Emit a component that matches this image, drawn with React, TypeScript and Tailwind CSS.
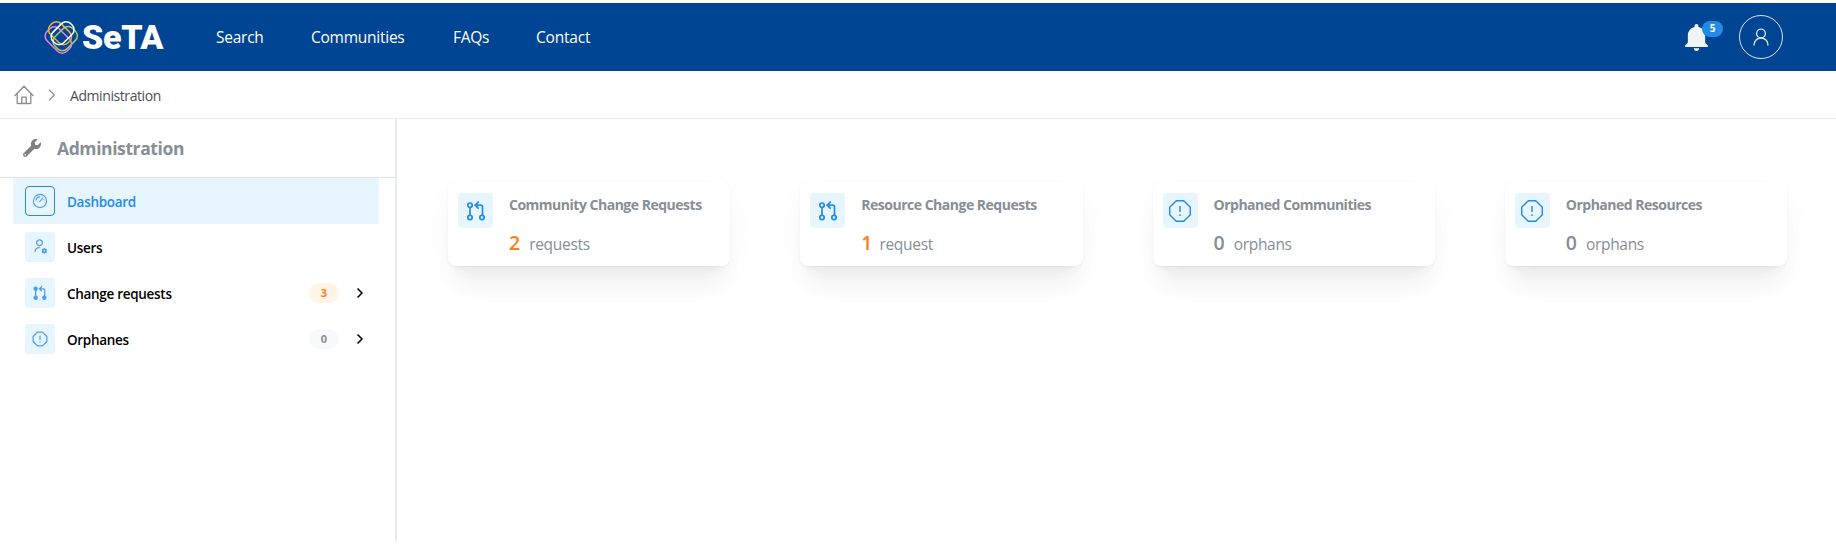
import { ReactNode } from "react";
import { IoMdNotifications } from "react-icons/io";
import { FaWrench } from "react-icons/fa";

function Logo() {
  return (
    <svg width="35" height="34" viewBox="0 0 35 34" fill="none" strokeWidth="1.5">
      <rect x="-12.5" y="-8.5" width="25" height="17" rx="6.5" stroke="#a3c96a" transform="translate(21.2 18.6) rotate(-45)" />
      <rect x="-14" y="-8.5" width="28" height="17" rx="6.5" stroke="#ee82d8" transform="translate(14.3 20) rotate(45)" />
      <rect x="-12.5" y="-7.5" width="25" height="15" rx="6.5" stroke="#e3b440" transform="translate(16 13.2) rotate(45)" />
      <rect x="-12.5" y="-7.5" width="25" height="15" rx="6.5" stroke="#ffffff" transform="translate(18.600 13.2) rotate(-45)" />
    </svg>
  );
}

function HomeIcon() {
  return (
    <svg width="20" height="20" viewBox="0 0 20 20" fill="none" stroke="#868e96" strokeWidth="1.3" strokeLinejoin="round" strokeLinecap="round">
      <path d="M1 10.5 10 1.2l9 9.3M3.2 8.8v9.7h13.6V8.8M7.8 18.3v-6.2h4.4v6.2" />
    </svg>
  );
}

function Chevron({ className, size }: { className: string; size: number }) {
  return (
    <svg width={size} height={size} viewBox="0 0 12 12" fill="none" stroke="currentColor" className={className}>
      <path d="m3.5 1.5 4.5 4.5-4.5 4.5" />
    </svg>
  );
}

function PersonIcon() {
  return (
    <svg width="16" height="18" viewBox="0 0 16 18" fill="none" stroke="#dbe4f0" strokeWidth="1.4">
      <circle cx="8" cy="5.5" r="4.4" />
      <path d="M1 17.5c0-4.4 3-7.5 7-7.5s7 3.1 7 7.5" />
    </svg>
  );
}

function MeterIcon() {
  return (
    <svg width="16" height="16" viewBox="0 0 16 16" fill="none" stroke="currentColor" strokeWidth="1.1">
      <circle cx="8" cy="8" r="6.6" />
      <path d="m7.5 8.8 3.7-4.3M4 7.8A4.2 4.2 0 0 1 8.2 3.9M12 7.4l-.4-1" />
    </svg>
  );
}

function UserCogIcon() {
  return (
    <svg width="16" height="16" viewBox="0 0 16 16" fill="none" stroke="currentColor" strokeWidth="1.2">
      <circle cx="7.5" cy="3.8" r="2.9" />
      <path d="M3 13c0-3 1.7-4.3 4.8-4.3" />
      <circle cx="12.3" cy="11.9" r="1.6" strokeWidth="1.6" />
      <path d="M12.3 9v1.3M12.3 13.5v1.3M9.8 10.4l1.1.7M13.7 12.7l1.1.7M9.8 13.4l1.1-.7M13.7 11.1l1.1-.7" />
    </svg>
  );
}

function PullRequestIcon({ size, dotFill }: { size: number; dotFill: string }) {
  return (
    <svg width={size} height={size} viewBox="0 0 22 22" fill="none" stroke="currentColor" strokeWidth="1.7">
      <g fill={dotFill}>
        <circle cx="5" cy="5.2" r="2.2" />
        <circle cx="5" cy="17.5" r="2.2" />
        <circle cx="17" cy="17.5" r="2.2" />
      </g>
      <path d="M5 7.4v7.9M17.5 15.3V7c0-1.2-.6-1.8-1.8-1.8h-5M13.7 1.7l-3.5 3.5 3.5 3.5" />
    </svg>
  );
}

function StopIcon({ size, stroke }: { size: number; stroke: number }) {
  return (
    <svg width={size} height={size} viewBox="0 0 24 24" fill="none" stroke="currentColor" strokeWidth={stroke}>
      <path d="M8.3 1.7h7.4l6.6 6.6v7.4l-6.6 6.6H8.3l-6.6-6.6V8.3Z" strokeLinejoin="round" />
      <path d="M12 7v6M12 15.2v1.8" />
    </svg>
  );
}

type ItemProps = {
  icon: ReactNode;
  label: string;
  active?: boolean;
  badge?: ReactNode;
};

function NavItem({ icon, label, active, badge }: ItemProps) {
  return (
    <a className={`flex h-[46px] items-center pl-3 pr-[13px] ${active ? "bg-[#e7f5ff] text-[#228be6]" : "text-black"}`}>
      <span className={`flex size-[30px] items-center justify-center rounded bg-[#e7f5ff] text-[#4a9fe9] ${active ? "border border-[#228be6]" : ""}`}>
        {icon}
      </span>
      <span className="ml-3 whitespace-nowrap pt-[2px] text-[13.5px] font-semibold tracking-[-0.3px]">{label}</span>
      {badge && (
        <span className="ml-auto flex items-center">
          {badge}
          <Chevron size={12} className="ml-[15px] [stroke-width:1.5]" />
        </span>
      )}
    </a>
  );
}

type CardProps = {
  icon: ReactNode;
  title: string;
  count: number;
  unit: string;
};

function StatCard({ icon, title, count, unit }: CardProps) {
  return (
    <section className="flex h-[84px] rounded-lg bg-white pl-[10px] pt-[11px] shadow-[0_1px_3px_rgba(0,0,0,0.05),0_28px_23px_-7px_rgba(0,0,0,0.04),0_12px_12px_-7px_rgba(0,0,0,0.04),0_10px_36px_rgba(0,0,0,0.03)]">
      <div className="flex size-[35px] items-center justify-center rounded bg-[#e7f5ff] text-[#228be6]">{icon}</div>
      <div className="ml-4 text-[#868e96]">
        <h2 className="whitespace-nowrap pt-px text-[14px] font-bold leading-[22px] tracking-[-0.49px]">{title}</h2>
        <p className="mt-[11px] flex items-baseline whitespace-nowrap leading-[32px]">
          <span className={`text-[19.5px] font-semibold ${count ? "text-[#fd7e14]" : ""}`}>{count}</span>
          <span className={`text-[15.5px] tracking-[-0.3px] ${count === 1 ? "ml-[7px]" : "ml-[9px]"}`}>{unit}</span>
        </p>
      </div>
    </section>
  );
}

export default function App() {
  return (
    <div className="h-[550px] bg-white pt-[3px] font-['Open_Sans','Noto_Sans',sans-serif]">
      <header className="flex h-[68px] items-center bg-[#004494] pl-[44px] pr-[53px] text-white">
        <Logo />
        <span className="ml-[3px] w-[81px] font-['Roboto',sans-serif] text-[34px] font-black leading-none tracking-[-0.3px]">SeTA</span>
        <nav className="ml-[53px] flex gap-12 pt-[2px] text-[15.5px]">
          <a className="w-[47px] tracking-[-0.25px]">Search</a>
          <a className="w-[94px] tracking-[-0.25px]">Communities</a>
          <a className="w-[35px] tracking-[-0.3px]">FAQs</a>
          <a className="tracking-[-0.2px]">Contact</a>
        </nav>
        <div className="ml-auto flex items-center">
          <div className="relative mr-[26px]">
            <IoMdNotifications size={33} className="text-[#f1f3f5]" />
            <span className="absolute left-[22px] top-0 flex h-4 w-[21px] items-center justify-center rounded-full bg-[#228be6] text-[10px] font-bold">5</span>
          </div>
          <span className="flex size-11 items-center justify-center rounded-full border border-[#dbe4f0]">
            <PersonIcon />
          </span>
        </div>
      </header>

      <div className="flex h-[48px] items-center border-b border-[#e9ecef] pl-[14px] text-[14px] text-[#495057]">
        <HomeIcon />
        <Chevron size={14} className="ml-[11px] text-[#868e96]" />
        <span className="ml-[11px] pt-px tracking-[-0.42px]">Administration</span>
      </div>

      <div className="flex h-[422px]">
        <aside className="w-[397px] border-r-2 border-[#e7ecf1]">
          <div className="flex h-[59px] items-center border-b border-[#dee2e6] pl-[23px] text-[#868e96]">
            <FaWrench size={18} className="text-[#808080]" />
            <h1 className="ml-4 pt-px text-[17.5px] font-bold tracking-[-0.4px]">Administration</h1>
          </div>
          <nav className="ml-[13px] mr-4">
            <NavItem active icon={<MeterIcon />} label="Dashboard" />
            <NavItem icon={<UserCogIcon />} label="Users" />
            <NavItem
              icon={<PullRequestIcon size={16} dotFill="currentColor" />}
              label="Change requests"
              badge={<span className="flex h-5 w-[30px] items-center justify-center rounded-full bg-[#fff4e6] text-[11px] font-bold text-[#fd7e14]">3</span>}
            />
            <NavItem
              icon={<StopIcon size={16} stroke={1.8} />}
              label="Orphanes"
              badge={<span className="flex h-5 w-[30px] items-center justify-center rounded-full bg-[#f8f9fa] text-[11px] font-bold text-[#868e96]">0</span>}
            />
          </nav>
        </aside>
        <main className="grid flex-1 grid-cols-4 content-start gap-[70px] pl-[51px] pr-[49px] pt-[63px]">
          <StatCard icon={<PullRequestIcon size={22} dotFill="none" />} title="Community Change Requests" count={2} unit="requests" />
          <StatCard icon={<PullRequestIcon size={22} dotFill="none" />} title="Resource Change Requests" count={1} unit="request" />
          <StatCard icon={<StopIcon size={24} stroke={1.4} />} title="Orphaned Communities" count={0} unit="orphans" />
          <StatCard icon={<StopIcon size={24} stroke={1.4} />} title="Orphaned Resources" count={0} unit="orphans" />
        </main>
      </div>
    </div>
  );
}
